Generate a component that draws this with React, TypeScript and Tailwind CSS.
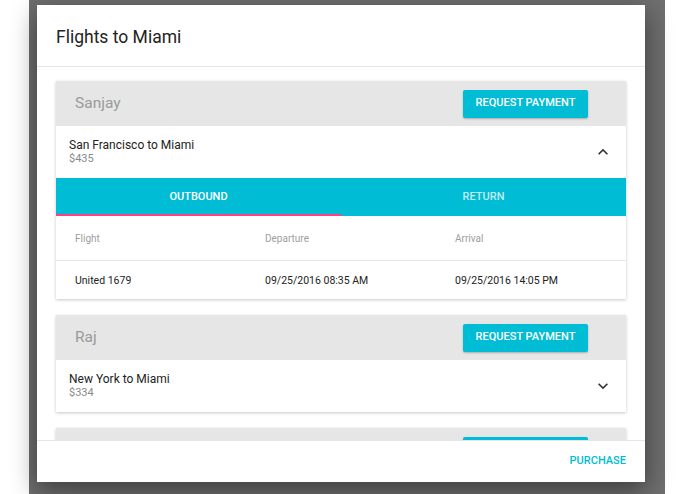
import React from "react";

const CYAN = "bg-[#00bcd4]";

function ExpandIcon({ up }: { up?: boolean }) {
  return (
    <svg width="20" height="20" viewBox="0 0 24 24" className="fill-[#333]">
      {up ? (
        <path d="M12 8l-6 6 1.41 1.41L12 10.83l4.59 4.58L18 14z" />
      ) : (
        <path d="M16.59 8.59L12 13.17 7.41 8.59 6 10l6 6 6-6z" />
      )}
    </svg>
  );
}

function PersonCard({
  name,
  route,
  price,
  open,
}: {
  name?: string;
  route?: string;
  price?: string;
  open?: boolean;
}) {
  return (
    <div className="bg-white shadow-[0_1px_3px_rgba(0,0,0,0.22)] shrink-0">
      <div className="h-[45px] bg-[#e6e6e6] flex items-center justify-between pl-[19px] pr-[38px]">
        <span className="text-[15.5px] text-[#9a9a9a] pt-[1px]">{name}</span>
        <button
          aria-label="Request payment"
          className={`${CYAN} h-[28px] w-[125px] rounded-[2px] text-white text-[11px] font-medium shadow-[0_1px_2px_rgba(0,0,0,0.25)]`}
        >
          {name ? "REQUEST PAYMENT" : null}
        </button>
      </div>
      {route && (
        <div className="h-[52px] flex items-center justify-between pl-[13px] pr-[13px]">
          <div className="flex flex-col leading-[14px]">
            <span className="text-[12px] text-[#222]">{route}</span>
            <span className="text-[11px] text-[#8a8a8a]">{price}</span>
          </div>
          <ExpandIcon up={open} />
        </div>
      )}
      {open && (
        <>
          <div className={`${CYAN} h-[38px] flex relative`}>
            <div className="flex-1 flex items-center justify-center text-[11px] font-medium text-white pt-[1px]">
              OUTBOUND
            </div>
            <div className="flex-1 flex items-center justify-center text-[11px] font-medium text-white/75 pt-[1px]">
              RETURN
            </div>
            <div className="absolute left-0 bottom-0 h-[2px] w-1/2 bg-[#ff4081]" />
          </div>
          <div className="grid grid-cols-[190px_190px_1fr] h-[45px] items-center pl-[19px] border-b border-[#e6e6e6] text-[10px] text-[#9e9e9e]">
            <span>Flight</span>
            <span>Departure</span>
            <span>Arrival</span>
          </div>
          <div className="grid grid-cols-[190px_190px_1fr] h-[38px] items-center pl-[19px] pt-[1px] text-[10.5px] text-[#222]">
            <span>United 1679</span>
            <span>09/25/2016 08:35 AM</span>
            <span>09/25/2016 14:05 PM</span>
          </div>
        </>
      )}
    </div>
  );
}

export default function App() {
  return (
    <div className="w-[695px] h-[494px] bg-white flex font-['Roboto',sans-serif] overflow-hidden">
      <div className="ml-[29px] w-[636px] h-full bg-[#6e6e6e] pt-[5px] pl-[8px]">
        <div className="w-[608px] h-[477px] bg-white flex flex-col shadow-[0_8px_24px_rgba(0,0,0,0.45)]">
          <div className="h-[62px] shrink-0 flex items-center pl-[19px] border-b border-[#e6e6e6]">
            <h1 className="text-[17.5px] text-[#222] pt-[3px]">Flights to Miami</h1>
          </div>
          <div className="flex-1 overflow-hidden px-[19px] pt-[14px] flex flex-col gap-[16px]">
            <PersonCard name="Sanjay" route="San Francisco to Miami" price="$435" open />
            <PersonCard name="Raj" route="New York to Miami" price="$334" />
            <PersonCard />
          </div>
          <div className="h-[42px] shrink-0 border-t border-[#e6e6e6] flex items-center justify-end pr-[19px]">
            <span className="text-[11px] font-medium text-[#00bcd4]">PURCHASE</span>
          </div>
        </div>
      </div>
    </div>
  );
}
